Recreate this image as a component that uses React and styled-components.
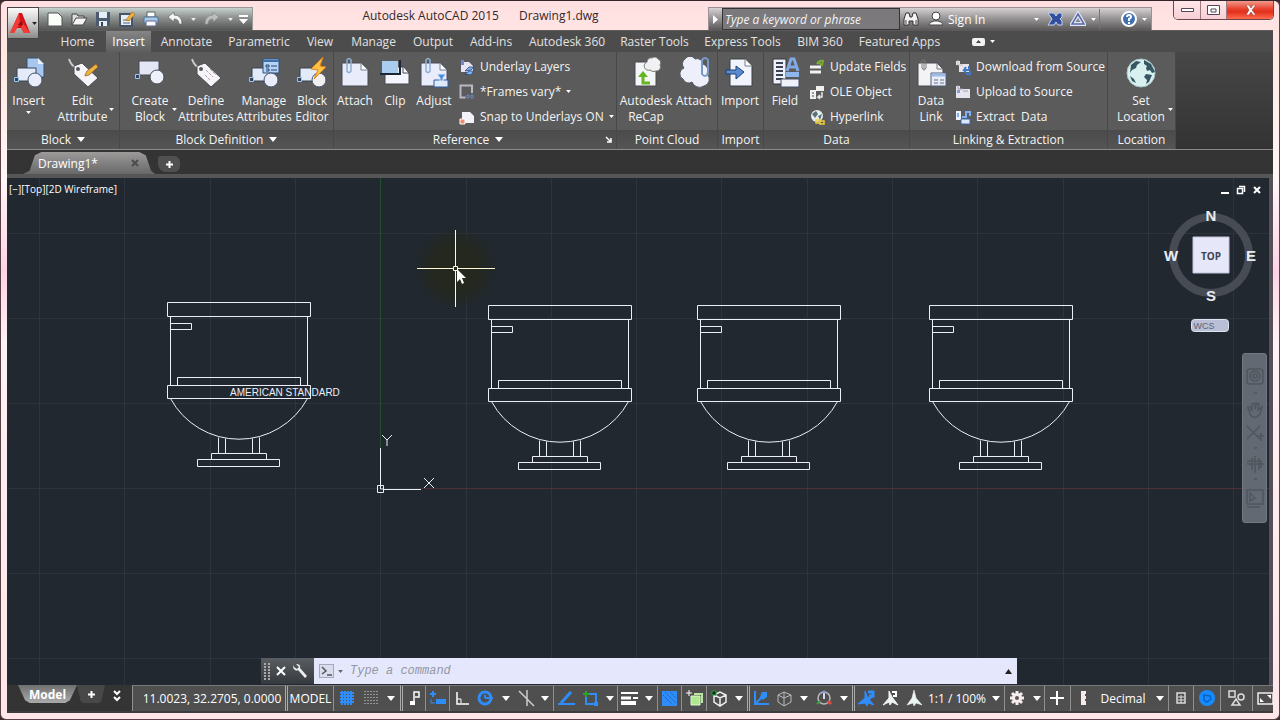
import React from "react";
import styled, { createGlobalStyle } from "styled-components";

const Global = createGlobalStyle`
  *, *::before, *::after { box-sizing: border-box; }
  body { margin: 0; background: #3a2a30; }
  body, button, input { font-family: "Open Sans", "Noto Sans", sans-serif; font-size: 12px; }
  button { margin: 0; padding: 0; border: 0; background: none; color: inherit; cursor: pointer; }
  svg { display: block; flex: none; }
`;

/* ---------- window shell ---------- */
const Window = styled.div`
  display: flex;
  flex-direction: column;
  min-height: 100vh;
  padding: 0 6px 6px;
  overflow: hidden;
  border: 1px solid #5a4147;
  border-top-color: #33242a;
  border-radius: 6px;
  background: linear-gradient(180deg, #ffdfe2 0, #ffe9e2 60px, #fff6f6 180px, #ffd3e6 270px, #fff1f4 340px, #ffe6e8 100%);
`;

const TitleBar = styled.header`
  display: flex;
  height: 29px;
  margin-right: -1px;
`;

const AppButton = styled.button`
  display: flex;
  align-items: center;
  justify-content: center;
  gap: 2px;
  width: 32px;
  height: 32px;
  margin-top: 6px;
  position: relative;
  z-index: 1;
  border: 1px solid #444;
  background: linear-gradient(#fafafa, #c9c9c9 50%, #8b8b8b);
`;

const QuickAccess = styled.div`
  display: flex;
  align-items: center;
  gap: 8px;
  width: 214px;
  height: 23px;
  margin-top: 6px;
  padding-left: 8px;
  border: 1px solid #999;
  border-left: 0;
  border-bottom: 0;
  background: linear-gradient(#c5d2cd, #8b8f8e 45%, #555);
`;

const QuickButton = styled.button`
  display: flex;
  justify-content: center;
  width: ${(p) => (p.$narrow ? "5px" : "16px")};
`;

const Caption = styled.div`
  display: flex;
  flex: 1;
  justify-content: center;
  gap: 20px;
  padding-top: 6px;
  line-height: 18px;
  color: #33282b;
  white-space: nowrap;
`;

const InfoCenter = styled.div`
  display: flex;
  align-items: center;
  width: 444px;
  height: 23px;
  margin-top: 6px;
  border: 1px solid #9d8f92;
  border-bottom: 0;
  background: linear-gradient(#d6d2d3, #9a9798 45%, #5a5859);
  color: #fff;
`;

const SearchInput = styled.input`
  width: 178px;
  height: 22px;
  padding: 0 2px;
  border: 1px solid #333;
  background: #7b797b;
  color: #fff;
  font-style: italic;
  &::placeholder { color: #f4f4f4; opacity: 1; }
`;

const InfoButton = styled.button`
  display: flex;
  align-items: center;
  justify-content: ${(p) => p.$align || "center"};
  gap: 5px;
  width: ${(p) => p.$w}px;
  height: 20px;
  padding-left: ${(p) => (p.$align === "flex-start" ? "5px" : "0")};
  border-left: ${(p) => (p.$rule ? "1px solid #777" : "0")};
`;

const WindowControls = styled.div`
  display: flex;
  height: 19px;
  margin-left: 21px;
  border: 1px solid #6a474d;
  border-top: 0;
  border-radius: 0 0 5px 5px;
  overflow: hidden;
`;

const ControlButton = styled.button`
  display: flex;
  align-items: center;
  justify-content: center;
  width: ${(p) => (p.$close ? "47px" : "26px")};
  border-left: ${(p) => (p.$first ? "0" : "1px solid #a0787f")};
  background: ${(p) => (p.$close ? "linear-gradient(#f09a8a, #e8402c 45%, #e0301c 60%, #ff6a4c)" : "linear-gradient(#ffe6ea, #f6cfd5)")};
`;

/* ---------- ribbon ---------- */
const RibbonTabs = styled.nav`
  display: flex;
  height: 22px;
  padding-left: 42px;
  background: #4c4c4c;
  border-top: 1px solid #5c5c5c;
  color: #e9e9e9;
`;

const RibbonTab = styled.button`
  width: ${(p) => p.$w}px;
  height: 21px;
  line-height: 19px;
  white-space: nowrap;
  color: ${(p) => (p.$active ? "#fff" : "#e2e2e2")};
  background: ${(p) => (p.$active ? "linear-gradient(#858585, #5e5e5e)" : "none")};
`;

const Minimize = styled.button`
  display: flex;
  align-items: center;
  gap: 5px;
  margin-left: 22px;
`;

const Ribbon = styled.section`
  display: flex;
  height: 98px;
  border-bottom: 1px solid #8a8a8a;
  background: linear-gradient(#474747, #333);
`;

const Panel = styled.section`
  display: flex;
  flex-direction: column;
  width: ${(p) => p.$w}px;
  border-right: 1px solid #484848;
  background: #5b5b5b;
  color: #f4f4f4;
`;

const PanelBody = styled.div`
  display: flex;
  flex: 1;
  padding-left: ${(p) => p.$pad || 0}px;
`;

const PanelTitle = styled.h2`
  display: flex;
  position: relative;
  align-items: center;
  justify-content: center;
  gap: 6px;
  height: 19px;
  margin: 0;
  padding-right: ${(p) => (p.$launcher ? "14px" : "0")};
  font-size: 12px;
  font-weight: 400;
  white-space: nowrap;
  background: linear-gradient(#4b4b4b, #555);
`;

const Launcher = styled.button`
  position: absolute;
  right: 4px;
  top: 6px;
`;

const BigButton = styled.button`
  display: flex;
  flex-direction: column;
  align-items: center;
  position: relative;
  width: ${(p) => p.$w}px;
  padding-top: 5px;
  line-height: 16px;
  white-space: nowrap;
  text-align: center;
`;

const BigLabel = styled.span`
  margin-top: 4px;
`;

const SideCaret = styled.span`
  position: absolute;
  right: ${(p) => (p.$below ? "auto" : "1px")};
  top: ${(p) => (p.$below ? "59px" : "56px")};
`;

const SmallList = styled.div`
  display: flex;
  flex-direction: column;
  padding: 2px 0 0 5px;
`;

const SmallButton = styled.button`
  display: flex;
  align-items: center;
  gap: 5px;
  height: 25px;
  line-height: 23px;
  white-space: pre;
`;

/* ---------- file tabs ---------- */
const FileTabs = styled.nav`
  display: flex;
  align-items: flex-end;
  height: 28px;
  padding-left: 16px;
  background: #343434;
  border-bottom: 4px solid #565656;
`;

const FileTab = styled.button`
  display: flex;
  align-items: center;
  justify-content: space-between;
  width: 132px;
  height: 22px;
  padding: 0 16px 0 15px;
  background: linear-gradient(#9d9a9a, #686868);
  clip-path: polygon(0 100%, 5% 85%, 9% 15%, 14% 0, 88% 0, 93% 15%, 97% 85%, 100% 100%);
  color: #fff;
`;

const AddTab = styled.button`
  display: flex;
  align-items: center;
  justify-content: center;
  width: 22px;
  height: 16px;
  margin: 0 0 2px 3px;
  border-radius: 3px 6px 6px 8px;
  background: #505050;
`;

/* ---------- drawing area ---------- */
const Canvas = styled.main`
  flex: 1;
  position: relative;
  min-height: 440px;
  border-right: 4px solid #56505a;
  background: #212830;
`;

const Drawing = styled.svg`
  position: absolute;
  inset: 0;
  width: 100%;
  height: 100%;
`;

const ViewLabel = styled.div`
  position: absolute;
  left: 2px;
  top: 4px;
  font-size: 10px;
  line-height: 14px;
  color: #fff;
`;

const ViewControls = styled.div`
  display: flex;
  position: absolute;
  right: 7px;
  top: 7px;
  gap: 6px;
`;

const ViewCube = styled.div`
  position: absolute;
  right: 13px;
  top: 29px;
`;

const NavBar = styled.div`
  position: absolute;
  right: 2px;
  top: 175px;
  width: 25px;
  height: 170px;
  border-radius: 3px;
  border: 1px solid #737982;
  background: #636972;
`;

const CommandLine = styled.form`
  display: flex;
  position: absolute;
  left: 254px;
  right: 252px;
  bottom: 1px;
  height: 26px;
`;

const CommandTools = styled.div`
  display: flex;
  align-items: center;
  gap: 6px;
  width: 53px;
  padding-left: 3px;
  background: linear-gradient(#5a5e62, #36393d);
`;

const CommandBox = styled.div`
  display: flex;
  flex: 1;
  align-items: center;
  gap: 3px;
  padding: 0 5px;
  background: #e5e8fc;
`;

const CommandInput = styled.input`
  flex: 1;
  height: 24px;
  padding: 0 4px;
  border: 0;
  background: transparent;
  font-family: "Liberation Mono", monospace;
  font-style: italic;
  &::placeholder { color: #9496a4; opacity: 1; }
`;

/* ---------- status bar ---------- */
const StatusBar = styled.footer`
  display: flex;
  height: 28px;
  border-bottom: 2px solid #3c3c3c;
  background: #343434;
  color: #fff;
  overflow: hidden;
`;

const LayoutTabs = styled.div`
  display: flex;
  flex: none;
  width: 125px;
  padding-left: 11px;
`;

const LayoutTab = styled.button`
  display: flex;
  align-items: center;
  justify-content: center;
  width: ${(p) => p.$w}px;
  height: 18px;
  font-weight: 700;
  clip-path: polygon(0 0, 100% 0, 88% 85%, 80% 100%, 20% 100%, 12% 85%);
  background: ${(p) => (p.$dim ? "#484848" : "linear-gradient(#707070, #aaa)")};
`;

const LayoutMore = styled.button`
  display: flex;
  padding: 5px 0 0 8px;
`;

const StatusCell = styled.button`
  display: flex;
  flex: none;
  align-items: center;
  justify-content: center;
  width: ${(p) => p.$w}px;
  height: 26px;
  padding-left: ${(p) => (p.$wide ? "6px" : "0")};
  border-top: 1px solid #777;
  border-left: ${(p) => (p.$rule === 2 ? "3px double #aaa" : p.$rule ? "1px solid #909090" : "0")};
  background: #4f4f4f;
  color: #fff;
  white-space: nowrap;
`;

/* ---------- icons ---------- */
const Caret = ({ w = 8, c = "#fff" }) => (
  <svg width={w} height={w === 8 ? 5 : 3} viewBox="0 0 8 5" aria-hidden="true"><path d="M0 0h8L4 5z" fill={c} /></svg>
);

const Icon = ({ s = 16, children }) => (
  <svg width={s} height={s} viewBox={`0 0 ${s} ${s}`} fill="none" aria-hidden="true">{children}</svg>
);

const Handle = <path d="M1.500 20.500h4v4h-4z" fill="#2b4664" stroke="#9cc4ee" />;
const Shapes = (
  <>
    <path d="M4 11h19v13H4z" fill="#e3ebfa" stroke="#39424e" />
    {Handle}
  </>
);
const Tag = (
  <>
    <path d="M2 2c2 6 4 8 8 9" stroke="#c9c9c9" strokeWidth="2" />
    <path d="M7 9l8-3 16 15-10 9L7 17z" fill="#f4f4f9" stroke="#4a4a50" />
    <circle cx="11" cy="12" r="2" fill="#55585e" />
  </>
);
const Sheet = <path d="M3 6h19l7 7v16H3z" fill="#e9edfb" stroke="#484b55" />;
const Fold = <path d="M22 6v7h7z" fill="#fff" stroke="#777e8c" />;
const Clip = <path d="M8 6V3q2-3 4 0v11q-2 3-4 0V6" stroke="#8eaed6" strokeWidth="1.500" />;

const big = {
  insert: (
    <><path d="M14 1h11l6 6v13H14z" fill="#a8c7f0" stroke="#37506e" /><path d="M25 1v6h6z" fill="#e8f1fd" />
      {Shapes}<circle cx="22" cy="23" r="7" fill="#e9edf9" stroke="#43536a" /></>
  ),
  edit: <>{Tag}<path d="M18 18l2-4L29 7l2 3-9 8-4 1z" fill="#f3b13f" stroke="#8a5a18" strokeWidth=".7" /></>,
  create: <><path d="M5 4h20v14H5z" fill="#e3e7f5" stroke="#474b55" /><path d="M1.500 17.500h4v4h-4z" fill="#2b4664" stroke="#9cc4ee" /><circle cx="23" cy="20" r="7" fill="#eef0fa" stroke="#474b55" /></>,
  define: <>{Tag}<path d="M16 13l7 7M20 12l6 6M15 18l5 5" stroke="#b7a1a9" strokeDasharray="3 1" /></>,
  manage: <>{Shapes}<path d="M15 2h16v14H15z" fill="#b7d2f7" stroke="#28517f" /><path d="M15 4h16" stroke="#3c70ab" strokeWidth="2" /><path d="M18 8h3v2h-3zM18 12h3v2h-3M23 9h6M23 13h6" stroke="#24446b" /><circle cx="23" cy="23" r="7" fill="#e9edf9" stroke="#43536a" /></>,
  editor: <>{Shapes}<circle cx="23" cy="23" r="7" fill="#f2f0ee" stroke="#43536a" /><path d="M27 0L15 12l7 1-4 9 12-12-6-1z" fill="#ffc044" stroke="#e08518" /></>,
  attach: <>{Sheet}{Fold}{Clip}</>,
  clip: <><path d="M6 10h18l6 6v11H6z" fill="#f4f5fd" stroke="#484b55" /><path d="M3 4h16v12H3z" fill="#a9cdf0" /><path d="M1 17h20V3" stroke="#1d2733" strokeWidth="2" /><path d="M24 9v7h6z" fill="#fff" stroke="#484b55" /></>,
  adjust: <>{Sheet}{Fold}{Clip}<path d="M16 23h14v7H16z" fill="#dfeafa" stroke="#2f5f9f" /><path d="M19 17h9l-3 4v3h-3v-3z" fill="#4c8be0" stroke="#dceaff" /></>,
  recap: <><path d="M5 5h16l5 6v18H5z" fill="#f4f6f8" stroke="#484b55" /><path d="M17 5a4 4 0 015-4 4 4 0 016 1 4 4 0 012 6 4 4 0 01-4 6 5 5 0 01-6-1 4 4 0 01-3-8" fill="#f1f1f4" stroke="#777" /><path d="M20 26h-7v-8" stroke="#65b71e" strokeWidth="3" /><path d="M8 20l5-6 5 6z" fill="#65b71e" /></>,
  cloud: <><path d="M6 11A6 6 0 017 2a6 6 0 0110 0 6 6 0 018 5 7 7 0 014 10 7 7 0 01-3 12 8 8 0 01-12-4 6 6 0 01-9-3 6 6 0 011-11" fill="#edf0fb" stroke="#55585f" /><path d="M24 7v10q3 4 6 0V3q-3-4-6 0v12" stroke="#7998c6" strokeWidth="2" /></>,
  import: <><path d="M6 2h15l7 7v20H6z" fill="#f1f4fc" stroke="#3c4048" /><path d="M21 2v7h7" fill="#fff" stroke="#777e8c" /><path d="M2 13h10V9l8 6-8 7v-5H2z" fill="#5a8ad2" stroke="#1e3f73" /></>,
  field: <><path d="M4 2h13v25H4z" fill="#eef1fa" stroke="#32363e" /><path d="M7 6h7M7 10h7M7 14h7M7 18h7M7 22h7" stroke="#3b4454" strokeWidth="2" /><path d="M18 14l4-12h3l4 12M20 10h7" stroke="#81a9e4" strokeWidth="3" /><path d="M17 15h13v5H17z" fill="#8db7ed" /><path d="M12 22h18v8H12z" fill="#f0f2f9" stroke="#44536b" /></>,
  datalink: <><path d="M3 6h19l6 6v17H3z" fill="#f3f3f6" stroke="#484b55" /><path d="M22 6v6h6" stroke="#777" /><path d="M16 16h15v13H16z" fill="#e8ecf6" stroke="#526078" /><path d="M17 18h13" stroke="#9abce8" strokeWidth="3" /><path d="M19 23h4M25 23h4M19 26h4M25 26h4" stroke="#68728a" /><path d="M6 6q2-7 5 0v5q-2 4-4 0V7M9 4v8" stroke="#777" /></>,
  globe: <><circle cx="16" cy="16" r="14" fill="#d9f0f0" stroke="#a6c7ca" /><path d="M6 8l5-4 5 1-4 3-1 3-4 2-2 3z" fill="#365662" /><path d="M19 3l7 4 4 8-3 1-2-3-3 1-1-3 1-2-3-2zM21 17l6 1-3 7-3 2 1-4-3-3zM5 19l4 3 2 4-4-2z" fill="#365662" /></>,
};

const small = {
  layers: <><path d="M2 3h8l4 4v6H2z" fill="#e8e6f5" /><path d="M2 1h3v5H2z" fill="#718bc5" /><path d="M6 12l4-4h5l-3 3zM6 15l4-3h5l-3 4z" fill="#7fb0f4" stroke="#203b65" strokeWidth=".7" /></>,
  frames: <><path d="M13 9V1.500H1.500v12h5" stroke="#b9b9c2" strokeWidth="2" /><path d="M8 11h2v3H8zM12 11h2v3h-2z" stroke="#6f87ba" /></>,
  snap: <><path d="M3 3h8l4 4v7H3z" fill="#f2f2fa" /><path d="M1 10h5v5H1z" fill="#ef8b68" stroke="#fff" /></>,
  update: <><path d="M1 8h11M1 13h11" stroke="#f2f2f2" strokeWidth="3" /><path d="M8 5q2-4 6-3l-1 4-3-2" stroke="#79ae32" strokeWidth="2" /></>,
  ole: <><path d="M1 6h6v9H1zM7 2h8v5H7z" fill="#f0f0f0" /><path d="M3 9h2M3 12h2" stroke="#444" /><path d="M13 8v5H9l2-2m-2 2l2 2" stroke="#e8e8e8" strokeWidth="1.500" /></>,
  link: <><circle cx="8" cy="7" r="6" fill="#e4eeee" /><path d="M3 5l4-3 2 3-3 4zM9 7l4-2-2 6z" fill="#587077" /><path d="M7 11h4v3H7zM11 12h4v3h-4z" stroke="#f0cf3c" strokeWidth="1.500" /></>,
  download: <><path d="M1 2h4v4H1zM4 5h10v8H4z" fill="#e8e6ec" /><path d="M3 1v5h5" stroke="#c8bcbf" /><path d="M14 7v4H9l2-3m-2 3l2 3M11 15h4v-3" stroke="#3f77cc" strokeWidth="2" /></>,
  upload: <><path d="M1 2h4v12H1zM5 5h10v9H5z" fill="#e6e5ef" /><path d="M3 1v4h5M8 7h5" stroke="#a99bb0" /><path d="M2 6h3v3H2z" fill="#8a9dcb" /></>,
  extract: <><path d="M1 2h5v9H1z" fill="#eef1fa" /><path d="M3 4v4M7 8h4V3h4v4M11 2v3" stroke="#7eb1f4" strokeWidth="2" /><path d="M6 10h9v5H6z" fill="#dce9fc" stroke="#3b68ad" /></>,
};

const B = "#2f8dfa";
const status = {
  grid: <path d="M3 1v14M6 1v14M9 1v14M12 1v14M1 3h14M1 6h14M1 9h14M1 12h14" stroke={B} strokeWidth="2" />,
  dots: <path d="M2 1v15M5 1v15M8 1v15M11 1v15M14 1v15" stroke="#ddd" strokeDasharray="1 2" />,
  infer: <><path d="M8 13V2h5v5H9" stroke="#fff" strokeWidth="1.500" /><path d="M4 11h5v4H4z" fill="#fff" /></>,
  dyn: <><path d="M4 1v6M1 4h6" stroke={B} strokeWidth="2" /><path d="M7 9h10v5H7z" fill={B} /><path d="M2 9v4h4" stroke={B} /></>,
  ortho: <><path d="M3 2v12h12" stroke="#fff" strokeWidth="1.500" /><path d="M3 9h4v4" stroke="#fff" /></>,
  polar: <><circle cx="8" cy="8" r="6" stroke={B} strokeWidth="3" /><path d="M8 8V5M8 8h8" stroke={B} strokeWidth="2" /></>,
  iso: <path d="M1 1l15 15M9 0v16" stroke="#ccc" strokeWidth="1.500" />,
  track: <><path d="M0 14h17" stroke={B} strokeWidth="2" /><path d="M3 13L13 2" stroke={B} strokeWidth="3" /></>,
  osnap: <><path d="M4 4h10v10H4z" stroke={B} strokeWidth="2" /><path d="M12 12h4v4h-4z" fill={B} /><path d="M1 4h6M4 1v6" stroke="#2ca32c" strokeWidth="2" /></>,
  weight: <><path d="M0 3h17" stroke="#fff" strokeWidth="2" /><path d="M0 8h10" stroke="#fff" strokeWidth="3" /><path d="M0 13h15" stroke="#fff" strokeWidth="4" /><path d="M12 8h5" stroke="#fff" strokeWidth="2" /></>,
  transp: <><path d="M1 1h15v15H1z" fill={B} /><path d="M2 5l9 9M4 2l11 11M9 2l6 6" stroke="#1a60ba" strokeDasharray="2 1" /></>,
  cycle: <><path d="M5 6h9v9H5z" fill="#afe690" stroke="#dcfacb" /><path d="M8 4h8v9" stroke="#b7e89d" strokeWidth="2" /><path d="M3 0v6M0 3h6" stroke="#fff" /></>,
  osnap3: <><path d="M3 5l6-3 6 3v7l-6 4-6-4zM3 5l6 3 6-3M9 8v8" stroke="#eee" strokeWidth="1.500" /><path d="M1 1h4v4H1z" fill="#123" stroke="#2ca32c" /></>,
  ucs: <><path d="M2 1v13h14M2 14l9-9" stroke={B} strokeWidth="2" /><path d="M9 2h5v5l-4 3-3-3z" fill={B} /></>,
  cube: <path d="M2 5l6-3 7 3v7l-7 4-6-4zM2 5l6 3 7-3M8 8v8M8 2v6" stroke="#bbb" />,
  gizmo: <><circle cx="8" cy="8" r="6" stroke="#bbb" strokeWidth="1.500" /><path d="M8 2v7" stroke="#cfd8ee" strokeWidth="2" /><path d="M1 14l3-3" stroke="#3aa63a" strokeWidth="2" /><path d="M12 11l3 3" stroke="#e34a3a" strokeWidth="3" /><path d="M6 3l2-3 2 3z" fill="#7a9ff0" /></>,
  ann1: <><path d="M7 1v7l-7 6 7-1 2 3 1-3 6 2-6-7z" fill={B} stroke={B} /><path d="M10 2h5v4h-4M8 10l7-4" stroke={B} strokeWidth="3" /></>,
  ann2: <><path d="M7 1v7l-6 7 6-3 1 3 2-3 6 3-6-8z" fill="#eef5f0" stroke="#eef5f0" /><path d="M10 2h4v4h-3" stroke="#fff" strokeWidth="2" /></>,
  ann3: <path d="M8 0L6 8l-5 7 6-2 1 3 2-3 6 2-6-7z" fill="#e9f7f1" stroke="#fff" strokeWidth=".5" />,
  gear: <><circle cx="8" cy="8" r="5" fill="#f6eeee" /><path d="M8 1v14M1 8h14M3 3l10 10M13 3L3 13" stroke="#f6eeee" strokeWidth="3" /><circle cx="8" cy="8" r="2" fill="#5a5455" /></>,
  plus: <path d="M8 1v14M1 8h14" stroke="#fff" strokeWidth="2" />,
  ruler: <path d="M6 1h5v3h-1v2h1v3h-1v2h1v4H6z" fill="#f6eaea" />,
  props: <><path d="M4 3h8v10H4z" stroke="#ddd" strokeWidth="1.500" /><path d="M5 7h6M5 10h6M8 5v8" stroke="#ddd" /></>,
  perf: <><circle cx="8" cy="8" r="8" fill="#168bff" /><path d="M5 5l6 1 1 3-4 3-3-2z" stroke="#0961c4" strokeWidth="1.500" /></>,
  isolate: <><path d="M1 1h6v6H1z" stroke="#ddd" strokeWidth="1.500" /><circle cx="13" cy="7" r="3" stroke="#ddd" strokeWidth="1.500" /><path d="M4 15l4-6 4 6z" stroke="#ddd" strokeWidth="1.500" /></>,
  full: <><path d="M1 3h15v11H1z" stroke="#eee" strokeWidth="1.500" /><path d="M3 8v4h4zM10 5h4v4z" fill="#fff" /></>,
};

/* ---------- data ---------- */
const quickItems = [
  ["New", <path d="M1 2h10l4 4v9H1z" fill="#fbfff9" stroke="#555" />],
  ["Open", <><path d="M1 14V3h5l1 2h6v3" fill="#ddd" stroke="#444" /><path d="M1 14l4-7h11l-4 7z" fill="#f4f4f4" stroke="#444" /></>],
  ["Save", <><path d="M1 1h14v14H1z" fill="#4c5a70" /><path d="M4 1h8v6H4zM4 10h8v5H4z" fill="#e7edf5" /><path d="M6 11h2v4H6z" fill="#345" /></>],
  ["Save As", <><path d="M1 3h12v12H1z" fill="#e7edf5" stroke="#46546a" strokeWidth="2" /><path d="M4 9h7M4 12h7" stroke="#567" /><path d="M7 9l6-8 3 2-6 7z" fill="#f1b43c" stroke="#a3651c" strokeWidth=".6" /></>],
  ["Plot", <><path d="M4 1h8v5H4z" fill="#fff" stroke="#566" /><path d="M1 6h14v6H1z" fill="#a7c9ec" stroke="#4d7192" /><path d="M3 10h10v5H3z" fill="#f6fbff" stroke="#668" /></>],
  ["Undo", <path d="M1 6l6-5v3q8 0 8 9h-3q0-5-5-5v3z" fill="#f4f4f4" stroke="#666" strokeWidth=".7" />],
  ["Undo list", null],
  ["Redo", <path d="M15 6L9 1v3q-8 0-8 9h3q0-5 5-5v3z" fill="#bdbdbd" stroke="#888" strokeWidth=".7" />],
  ["Redo list", null],
];

const tabs = [
  ["Home", 57], ["Insert", 45], ["Annotate", 71], ["Parametric", 74], ["View", 48], ["Manage", 59], ["Output", 60],
  ["Add-ins", 56], ["Autodesk 360", 96], ["Raster Tools", 79], ["Express Tools", 97], ["BIM 360", 58], ["Featured Apps", 101],
];

const panels = [
  { title: "Block", w: 113, menu: true, tools: [["Insert", 43, "insert", "below"], ["Edit\nAttribute", 65, "edit", "side"]] },
  { title: "Block Definition", w: 214, pad: 2, menu: true, tools: [["Create\nBlock", 56, "create", "side"], ["Define\nAttributes", 56, "define"], ["Manage\nAttributes", 60, "manage"], ["Block\nEditor", 36, "editor"]] },
  { title: "Reference", w: 283, menu: true, launcher: true, tools: [["Attach", 42, "attach"], ["Clip", 38, "clip"], ["Adjust", 40, "adjust"]], list: [["Underlay Layers", "layers"], ["*Frames vary*", "frames", true], ["Snap to Underlays ON", "snap", true]] },
  { title: "Point Cloud", w: 101, pad: 3, tools: [["Autodesk\nReCap", 52, "recap"], ["Attach", 44, "cloud"]] },
  { title: "Import", w: 46, tools: [["Import", 44, "import"]] },
  { title: "Data", w: 146, pad: 2, tools: [["Field", 38, "field"]], list: [["Update Fields", "update"], ["OLE Object", "ole"], ["Hyperlink", "link"]] },
  { title: "Linking & Extraction", w: 198, pad: 2, tools: [["Data\nLink", 38, "datalink"]], list: [["Download from Source", "download"], ["Upload to Source", "upload"], ["Extract  Data", "extract"]] },
  { title: "Location", w: 68, tools: [["Set\nLocation", 66, "globe", "side"]] },
];

/* name, width, rule on the left edge (1 single, 2 double) */
const cells = [
  ["grid", 28, 1], ["dots", 20], ["caret", 19], ["infer", 25, 2], ["dyn", 24, 1], ["ortho", 25, 1], ["polar", 23], ["caret", 18],
  ["iso", 22], ["caret", 16], ["track", 25, 1], ["osnap", 25], ["caret", 14], ["weight", 24, 1], ["caret", 16], ["transp", 24, 1],
  ["cycle", 25, 1], ["osnap3", 25, 1], ["caret", 16], ["ucs", 26, 2], ["cube", 23], ["caret", 16], ["gizmo", 24], ["caret", 16],
  ["ann1", 26, 2], ["ann2", 24], ["ann3", 25], ["1:1 / 100%", 60], ["caret", 17], ["gear", 25, 1], ["caret", 15], ["plus", 26, 1],
  ["ruler", 25, 1], ["Decimal", 56], ["caret", 17], ["props", 25, 1], ["perf", 27, 1], ["isolate", 32, 1], ["full", 26, 1],
];

const fixtures = [[0, 0], [321, 3], [530, 3], [762, 3]];

const Lines = ({ text }) =>
  text.split("\n").map((line, i) => (
    <React.Fragment key={line}>{i > 0 && <br />}{line}</React.Fragment>
  ));

const Fixture = ({ x, y }) => (
  <g transform={`translate(${x} ${y})`}>
    <path d="M167.500 302.500h143v14h-143zM170.500 316.500v69M307.500 316.500v69M170.500 323.500h21v6h-21M177.500 385.500v-8h123v8M167.500 385.500h143v13h-143zM218.500 437.500v16M225.500 438.500v15M252.500 438.500v15M259.500 437.500v16M211.500 459.500v-6h55v6M197.500 459.500h82v7h-82z" />
    <path d="M170.500 398.500A78 78 0 00307.500 398.500" />
  </g>
);

const range = (n) => Array.from({ length: n }, (_, i) => i);

export default function App() {
  return (
    <Window>
      <Global />
      <TitleBar>
        <AppButton aria-label="Application menu">
          <svg width="20" height="22" viewBox="0 0 20 22">
            <path d="M9 1h3l8 20h-6l-3-5H7l-3 5H0z" fill="#d3141c" />
            <path d="M9 1l1 10-6 10H0zM13 11l7 10h-6l-3-5z" fill="#f23d35" />
            <path d="M8 13l3-4 2 4z" fill="#8d0c14" />
          </svg>
          <Caret w={5} c="#222" />
        </AppButton>
        <QuickAccess>
          {quickItems.map(([name, art]) => (
            <QuickButton key={name} aria-label={name} $narrow={!art}>
              {art ? <Icon>{art}</Icon> : <Caret w={5} c="#eee" />}
            </QuickButton>
          ))}
          <QuickButton aria-label="Customize" $narrow>
            <svg width="9" height="9" viewBox="0 0 9 9"><path d="M0 0h9v2H0zM0 4h9L4.500 9z" fill="#fff" /></svg>
          </QuickButton>
        </QuickAccess>
        <Caption><span>Autodesk AutoCAD 2015</span><span>Drawing1.dwg</span></Caption>
        <InfoCenter>
          <InfoButton $w={13} aria-label="Collapse search"><svg width="5" height="9" viewBox="0 0 5 9"><path d="M0 0l5 4.500L0 9z" fill="#fff" /></svg></InfoButton>
          <SearchInput aria-label="Search" placeholder="Type a keyword or phrase" />
          <InfoButton $w={22} aria-label="Find">
            <Icon><path d="M1 14V8l2-6h3l1 4h2l1-4h3l2 6v6h-5v-4H6v4z" fill="#f3f3f3" stroke="#333" /><path d="M3 9v4M13 9v4" stroke="#444" /></Icon>
          </InfoButton>
          <InfoButton $w={107} $align="flex-start">
            <Icon><circle cx="9" cy="5" r="4" fill="#fff" stroke="#444" /><path d="M2 14q0-3 5-4h4q5 1 5 4z" fill="#fff" stroke="#444" /></Icon>
            Sign In
          </InfoButton>
          <InfoButton $w={14} aria-label="Account menu"><Caret w={5} /></InfoButton>
          <InfoButton $w={24} aria-label="Exchange apps">
            <Icon><path d="M1 2h6l2 3 2-3h4v4l-2 2 2 2v4h-4l-2-3-2 3H1l4-6z" fill="#314f9d" stroke="#c4d2f4" /></Icon>
          </InfoButton>
          <InfoButton $w={32} aria-label="Autodesk 360">
            <Icon><path d="M8 3l6 10H2z" stroke="#dfe5fb" strokeWidth="4" /><path d="M8 3l6 10H2z" stroke="#5a6ca0" strokeWidth="1.500" /></Icon><Caret w={5} />
          </InfoButton>
          <InfoButton $w={48} $rule $align="flex-end" aria-label="Help">
            <Icon><circle cx="8" cy="8" r="7" fill="#4171b3" stroke="#fff" strokeWidth="2" /><path d="M6 6q0-2 2-2t2 2q0 1-2 2v2M8 11v2" stroke="#fff" strokeWidth="2" /></Icon><Caret w={5} />
          </InfoButton>
        </InfoCenter>
        <WindowControls>
          <ControlButton $first aria-label="Minimize"><svg width="13" height="5" viewBox="0 0 13 5"><path d="M.5.5h12v3H.5z" fill="#fff" stroke="#545" /></svg></ControlButton>
          <ControlButton aria-label="Maximize"><svg width="13" height="11" viewBox="0 0 13 11"><path d="M.5.5h12v9H.5zM4 4h5v3H4z" fill="#fff" stroke="#545" /></svg></ControlButton>
          <ControlButton $close aria-label="Close"><svg width="11" height="10" viewBox="0 0 11 10"><path d="M1 0h3l2 3 2-3h3L7 5l4 5H8L6 7l-2 3H1l3-5z" fill="#fff" stroke="#84443a" strokeWidth=".6" /></svg></ControlButton>
        </WindowControls>
      </TitleBar>

      <RibbonTabs>
        {tabs.map(([name, w]) => <RibbonTab key={name} $w={w} $active={name === "Insert"}>{name}</RibbonTab>)}
        <Minimize aria-label="Minimize ribbon">
          <svg width="13" height="8" viewBox="0 0 13 8"><rect width="13" height="8" rx="2" fill="#f2f2f2" /><path d="M4 5h5L6.500 2z" fill="#444" /></svg>
          <Caret w={5} />
        </Minimize>
      </RibbonTabs>

      <Ribbon>
        {panels.map((p) => (
          <Panel key={p.title} $w={p.w}>
            <PanelBody $pad={p.pad}>
              {p.tools.map(([label, w, art, menu]) => (
                <BigButton key={label} $w={w}>
                  <Icon s={32}>{big[art]}</Icon>
                  <BigLabel><Lines text={label} /></BigLabel>
                  {menu && <SideCaret $below={menu === "below"}><Caret w={5} /></SideCaret>}
                </BigButton>
              ))}
              {p.list && (
                <SmallList>
                  {p.list.map(([label, art, menu]) => (
                    <SmallButton key={label}><Icon>{small[art]}</Icon>{label}{menu && <Caret w={5} />}</SmallButton>
                  ))}
                </SmallList>
              )}
            </PanelBody>
            <PanelTitle $launcher={p.launcher}>
              {p.title}
              {p.menu && <Caret />}
              {p.launcher && (
                <Launcher aria-label="Reference settings">
                  <svg width="7" height="7" viewBox="0 0 7 7"><path d="M1 1l4 4M6 2v4H2" stroke="#fff" strokeWidth="1.500" fill="none" /></svg>
                </Launcher>
              )}
            </PanelTitle>
          </Panel>
        ))}
      </Ribbon>

      <FileTabs>
        <FileTab>
          Drawing1*
          <svg width="8" height="8" viewBox="0 0 8 8"><path d="M1 1l6 6M7 1L1 7" stroke="#4c4c4c" strokeWidth="2" /></svg>
        </FileTab>
        <AddTab aria-label="New drawing"><svg width="7" height="7" viewBox="0 0 7 7"><path d="M3.500 0v7M0 3.500h7" stroke="#fff" strokeWidth="2" /></svg></AddTab>
      </FileTabs>

      <Canvas>
        <Drawing aria-label="Drawing area">
          <defs>
            <radialGradient id="halo"><stop offset="0.500" stopColor="#24281f" /><stop offset="1" stopColor="#24281f" stopOpacity="0" /></radialGradient>
          </defs>
          <g transform="translate(-7 -178)" fill="none" stroke="#eceff8">
            <g stroke="#2d343d">
              {range(30).map((i) => <path key={i} d={`M${Math.round(39 + i * 85.3) + 0.5} 178v1400`} />)}
              {range(14).map((i) => <path key={i} d={`M7 ${Math.round(233 + i * 85) + 0.5}h2400`} />)}
            </g>
            <path d="M380.500 178v270" stroke="#22502c" />
            <path d="M421 488.500h2000" stroke="#523039" />
            <circle cx="456" cy="268" r="44" fill="url(#halo)" stroke="none" />
            {fixtures.map(([x, y]) => <Fixture key={x} x={x} y={y} />)}
            <text x="230" y="396" fill="#eceff8" stroke="none" fontFamily="Liberation Sans, sans-serif" fontSize="10">AMERICAN STANDARD</text>
            <path d="M380.500 448v37M384 489.500h37M377.500 485.500h6v7h-6zM380.500 485v4h3" />
            <path d="M382 435l5 5 5-5M387 440v6M424 478l10 10M434 478l-10 10" />
            <path d="M455.500 230v36M455.500 271v36M417 268.500h36M458 268.500h37M453.500 266.500h4v4h-4z" stroke="#fffbd8" />
            <path d="M457 269v13l3-3 2 5 2-1-2-5h4z" fill="#fff" stroke="none" />
          </g>
        </Drawing>
        <ViewLabel>[−][Top][2D Wireframe]</ViewLabel>
        <ViewControls>
          <button aria-label="Minimize view"><Icon s={10}><path d="M1 8h8" stroke="#fff" strokeWidth="2" /></Icon></button>
          <button aria-label="Restore view"><Icon s={10}><path d="M1.500 3.500h5v5h-5zM3 1.500h5.500V7" stroke="#fff" strokeWidth="1.500" /></Icon></button>
          <button aria-label="Close view"><Icon s={10}><path d="M2 2l6 6M8 2L2 8" stroke="#fff" strokeWidth="2" /></Icon></button>
        </ViewControls>
        <ViewCube>
          <svg width="94" height="126" viewBox="0 0 94 126" fontFamily="Liberation Sans, sans-serif" textAnchor="middle">
            <circle cx="49" cy="48" r="38" fill="none" stroke="#474b53" strokeWidth="8" />
            <path d="M31 30h36v36H31z" fill="#e6e7f8" stroke="#c4c2da" />
            <g fill="#e8edf4" fontSize="15" fontWeight="700">
              <text x="49" y="14">N</text><text x="49" y="94">S</text><text x="9" y="54">W</text><text x="89" y="54">E</text>
            </g>
            <text x="49" y="53" fontSize="10" fontWeight="700" fill="#40434f" fontFamily="Open Sans, sans-serif">TOP</text>
            <rect x="29.500" y="112.500" width="37" height="12" rx="3" fill="#b9bfd4" stroke="#dde1f0" />
            <text x="42" y="122" fontSize="9" fill="#5d6478">WCS</text>
          </svg>
        </ViewCube>
        <NavBar>
          <svg width="23" height="168" viewBox="0 0 23 168" fill="none" stroke="#50565e" strokeWidth="1.500">
            <rect x="4" y="15" width="16" height="15" rx="3" /><circle cx="12" cy="22" r="5" /><circle cx="12" cy="22" r="2" />
            <path d="M11 39h3M6 56q-3-4 1-3l2 4v-7l3-1v6l2-6 2 1-1 6 4-3-2 7q-6 7-10 0zM4 72l13 13M17 72L4 85M14 82h7M18 79v8M11 94h3M12 102v17M4 110h17M9 104v12M16 104v12M4 107h14v7M11 125h3M4 136h16v14H4zM7 139v8l5-3zM4 153h13" />
          </svg>
        </NavBar>
        <CommandLine onSubmit={(e) => e.preventDefault()}>
          <CommandTools>
            <svg width="6" height="18" viewBox="0 0 6 18"><path d="M1 1v17M5 1v17" stroke="#aaa" strokeWidth="2" strokeDasharray="2 1" /></svg>
            <button type="button" aria-label="Close command line"><Icon s={10}><path d="M1 1l8 8M9 1L1 9" stroke="#fff" strokeWidth="2" /></Icon></button>
            <button type="button" aria-label="Customize command line"><Icon><path d="M2 2q-2 3 1 5 2 1 3 0l7 8 2-2-7-8Q9 1 4 1l3 3-2 2-3-2z" fill="#eee" /></Icon></button>
          </CommandTools>
          <CommandBox>
            <Icon><rect x=".5" y="1.500" width="14" height="13" fill="#d8dced" stroke="#a5a9bd" /><path d="M3 4l4 4-4 3M8 12h5" stroke="#555" strokeWidth="1.500" /></Icon>
            <Caret w={5} c="#666" />
            <CommandInput aria-label="Command" placeholder="Type a command" />
            <svg width="7" height="5" viewBox="0 0 7 5"><path d="M0 5h7L3.500 0z" fill="#222" /></svg>
          </CommandBox>
        </CommandLine>
      </Canvas>

      <StatusBar>
        <LayoutTabs>
          <LayoutTab $w={59}>Model</LayoutTab>
          <LayoutTab $w={28} $dim aria-label="New layout"><svg width="7" height="7" viewBox="0 0 7 7"><path d="M3.500 0v7M0 3.500h7" stroke="#fff" strokeWidth="2" /></svg></LayoutTab>
          <LayoutMore aria-label="More layouts"><svg width="8" height="12" viewBox="0 0 8 12"><path d="M1 1l3 3 3-3M1 7l3 3 3-3" fill="none" stroke="#fff" strokeWidth="2" /></svg></LayoutMore>
        </LayoutTabs>
        <StatusCell $w={153} $rule={1} $wide>11.0023, 32.2705, 0.0000</StatusCell>
        <StatusCell $w={48} $rule={2}>MODEL</StatusCell>
        {cells.map(([name, w, rule], i) => (
          <StatusCell key={i} $w={w} $rule={rule} aria-label={name}>
            {name === "caret" ? <Caret /> : status[name] ? <Icon s={17}>{status[name]}</Icon> : name}
          </StatusCell>
        ))}
      </StatusBar>
    </Window>
  );
}
